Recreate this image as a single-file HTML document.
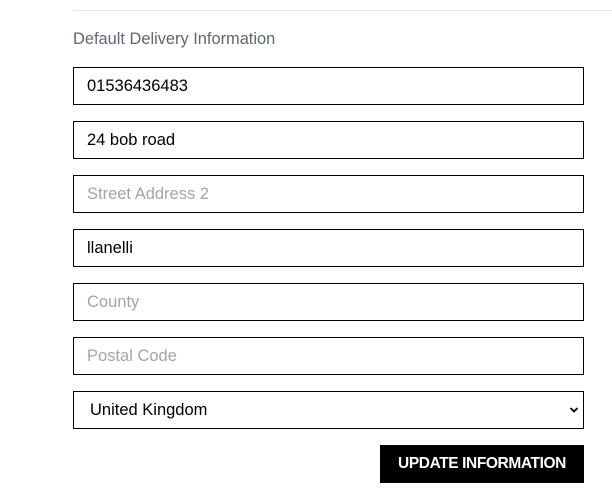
<!DOCTYPE html><html><head><style>
body{margin:0;width:612px;height:501px;background:#fff;font-family:"Liberation Sans",sans-serif;position:relative;overflow:hidden}
.hr{position:absolute;left:73px;top:10px;width:539px;height:1px;background:#e6e6e6}
.lbl{position:absolute;left:73px;top:30px;font-size:16.4px;color:#5f6670}
.f{position:absolute;left:73px;width:509px;height:36px;border:1px solid #000;font-size:16.5px;line-height:37px;box-sizing:content-box}
.f span{position:absolute;left:13px}
.p{color:#a0a5ab}
.btn{position:absolute;left:380px;top:445px;width:204px;height:38px;background:#000;color:#fff;font-size:15.5px;font-weight:bold;line-height:38px;text-align:center;letter-spacing:-0.4px}
</style></head><body>
<div class="hr"></div>
<div class="lbl">Default Delivery Information</div>
<div class="f" style="top:67px"><span>01536436483</span></div>
<div class="f" style="top:121px"><span>24 bob road</span></div>
<div class="f" style="top:175px"><span class="p">Street Address 2</span></div>
<div class="f" style="top:229px"><span>llanelli</span></div>
<div class="f" style="top:283px"><span class="p">County</span></div>
<div class="f" style="top:337px"><span class="p">Postal Code</span></div>
<div class="f" style="top:391px"><span style="left:16px">United Kingdom</span>
<svg style="position:absolute;right:4px;top:14px" width="10" height="8" viewBox="0 0 10 8"><path d="M1.5 2 L5 5.5 L8.5 2" fill="none" stroke="#000" stroke-width="1.8"/></svg></div>
<div class="btn">UPDATE INFORMATION</div>
</body></html>
